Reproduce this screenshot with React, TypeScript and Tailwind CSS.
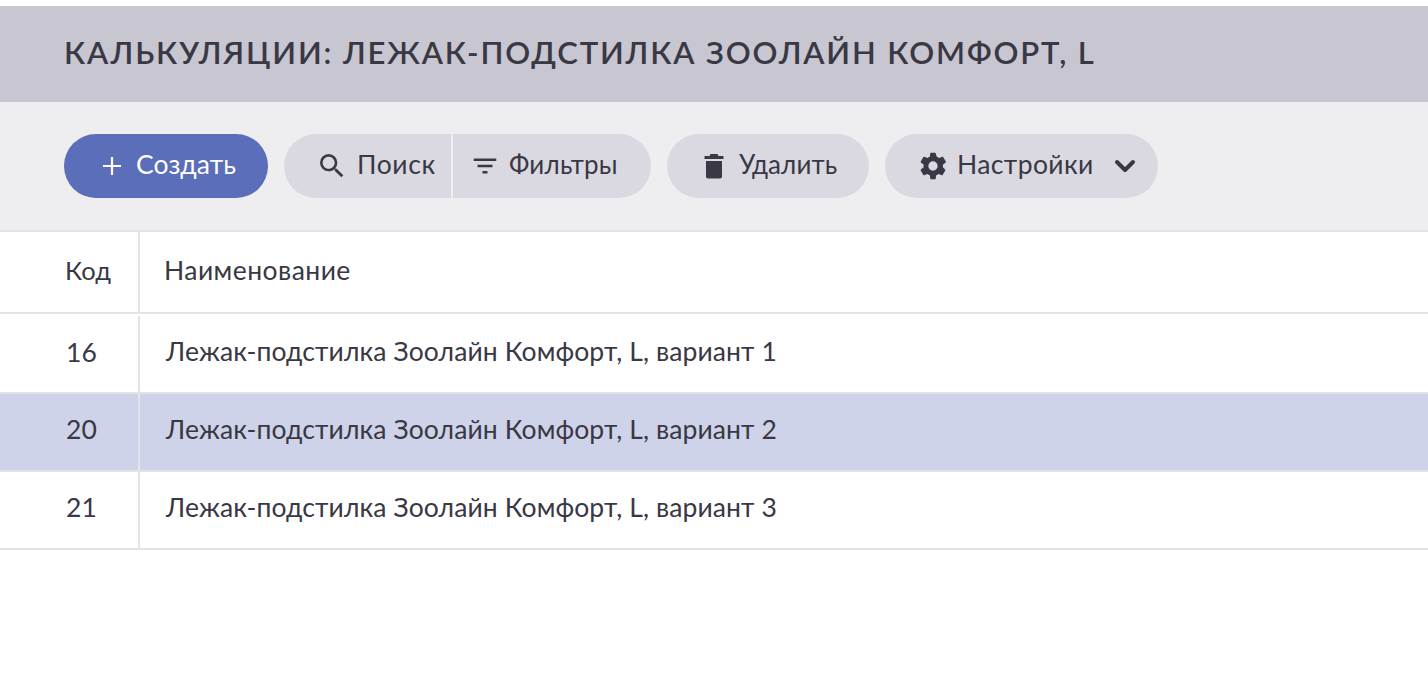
import React from "react";
import { ChevronDown } from "lucide-react";

const rows = [
  { id: 16, name: "Лежак-подстилка Зоолайн Комфорт, L, вариант 1" },
  { id: 20, name: "Лежак-подстилка Зоолайн Комфорт, L, вариант 2", selected: true },
  { id: 21, name: "Лежак-подстилка Зоолайн Комфорт, L, вариант 3" },
];

const PlusIcon = () => (
  <svg width="24" height="24" viewBox="0 0 24 24" fill="none" stroke="#fff" strokeWidth="2.2">
    <path d="M12 3v18M3 12h18" />
  </svg>
);

const SearchIcon = () => (
  <svg width="32" height="32" viewBox="0 0 24 24" fill="#393844">
    <path d="M15.500 14h-.79l-.28-.27A6.471 6.471 0 0 0 16 9.500 6.500 6.500 0 1 0 9.500 16c1.610 0 3.090-.59 4.230-1.570l.27.28v.79l5 4.990L20.490 19l-4.990-5zm-6 0C7.010 14 5 11.990 5 9.500S7.010 5 9.500 5 14 7.010 14 9.500 11.990 14 9.500 14z" />
  </svg>
);

const FilterIcon = () => (
  <svg width="30" height="30" viewBox="0 0 24 24" fill="#393844">
    <path d="M10 18h4v-2h-4v2zM3 6v2h18V6H3zm3 7h12v-2H6v2z" />
  </svg>
);

const TrashIcon = () => (
  <svg width="20" height="26" viewBox="0 0 20 26" fill="#393844">
    <path d="M6.500 1h7l1 2H19.500v3H0.500V3H5.500z" />
    <path d="M2 8h16v15.500a2 2 0 0 1-2 2H4a2 2 0 0 1-2-2z" />
  </svg>
);

const GearIcon = () => (
  <svg width="32" height="32" viewBox="0 0 24 24" fill="#393844">
    <path
      fillRule="evenodd"
      d="M19.400 13c.04-.33.06-.66.06-1s-.02-.67-.06-1l2.100-1.650a.5.500 0 0 0 .12-.64l-2-3.460a.5.500 0 0 0-.6-.22l-2.500 1a7.300 7.300 0 0 0-1.700-1L14 2.400a.5.500 0 0 0-.5-.4h-3a.5.500 0 0 0-.5.4L9.600 5.030a7.300 7.300 0 0 0-1.700 1l-2.500-1a.5.500 0 0 0-.6.22l-2 3.460a.5.500 0 0 0 .12.64L5 11c-.04.33-.07.67-.07 1s.03.67.07 1l-2.100 1.650a.5.500 0 0 0-.12.64l2 3.460c.12.22.38.3.6.22l2.500-1c.52.4 1.080.73 1.700 1L10 21.600a.5.500 0 0 0 .5.400h3a.5.500 0 0 0 .5-.4l.4-2.630a7.300 7.300 0 0 0 1.700-1l2.500 1c.22.08.48 0 .6-.22l2-3.460a.5.500 0 0 0-.12-.64zM12 15.500a3.500 3.500 0 1 1 0-7 3.500 3.500 0 0 1 0 7z"
    />
  </svg>
);

type RowProps = {
  code: React.ReactNode;
  name: string;
  selected?: boolean;
  head?: boolean;
  first?: boolean;
};

const Row: React.FC<RowProps> = ({ code, name, selected, head, first }) => (
  <div
    className={`flex border-b-2 border-[#e3e3e9] ${selected ? "bg-[#ced3ea]" : "bg-white"} ${
      head ? "h-[82px]" : first ? "h-[80px]" : "h-[78px]"
    }`}
  >
    <div
      className={`w-[140px] shrink-0 border-r-2 border-[#e3e3e9] flex items-center ${
        head ? "pl-[65px] pb-[3px] text-[25.500px]" : "pl-[66px]"
      } ${first ? "mt-[2px] pb-[3px]" : ""} ${!head && !first ? "pb-[4px]" : ""}`}
    >
      {code}
    </div>
    <div
      className={`flex items-center ${
        head ? "pl-[24px] pb-[3px] tracking-[0.45px]" : "pl-[26px]"
      } ${first ? "pb-[2px]" : ""} ${!head && !first ? "pb-[4px]" : ""}`}
    >
      {name}
    </div>
  </div>
);

export default function App() {
  return (
    <div className="min-h-[692px] bg-white pt-[6px] text-[26.5px] tracking-[0.1px] text-[#393844] font-['Lato','Noto_Sans',sans-serif]">
      <div className="h-[96px] bg-[#c8c6d1] flex items-center pl-[64px] pb-[4px]">
        <h1 className="text-[31px] font-semibold tracking-[1.85px] uppercase">
          Калькуляции: Лежак-подстилка Зоолайн Комфорт, L
        </h1>
      </div>

      <div className="h-[128px] bg-[#eeeef1] flex items-center pl-[64px] gap-[16px]">
        <button className="h-[64px] w-[204px] rounded-full bg-[#5b6eb9] text-white flex items-center pl-[36px] gap-[12px]">
          <PlusIcon />
          <span className="pb-[3px]">Создать</span>
        </button>

        <div className="h-[64px] w-[367px] rounded-full bg-[#dad9e2] flex items-center">
          <div className="h-full w-[169px] border-r-2 border-[#eeeef1] flex items-center pl-[32px] gap-[9px]">
            <SearchIcon />
            <span className="pb-[3px] tracking-[0.6px]">Поиск</span>
          </div>
          <div className="flex items-center pl-[17px] gap-[9px]">
            <FilterIcon />
            <span className="pb-[3px] text-[26px] tracking-[0.2px]">Фильтры</span>
          </div>
        </div>

        <button className="h-[64px] w-[202px] rounded-full bg-[#dad9e2] flex items-center pl-[37px] gap-[15px]">
          <TrashIcon />
          <span className="pb-[3px] text-[26px]">Удалить</span>
        </button>

        <button className="h-[64px] w-[273px] rounded-full bg-[#dad9e2] flex items-center pl-[32px] gap-[8px]">
          <GearIcon />
          <span className="pb-[3px] tracking-[0.4px]">Настройки</span>
          <ChevronDown size={32} strokeWidth={3} className="ml-[7px]" />
        </button>
      </div>

      <div className="border-t-2 border-[#e3e3e9]">
        <Row head code="Код" name="Наименование" />
        {rows.map((r, i) => (
          <Row key={r.id} code={r.id} name={r.name} selected={r.selected} first={i === 0} />
        ))}
      </div>
    </div>
  );
}
